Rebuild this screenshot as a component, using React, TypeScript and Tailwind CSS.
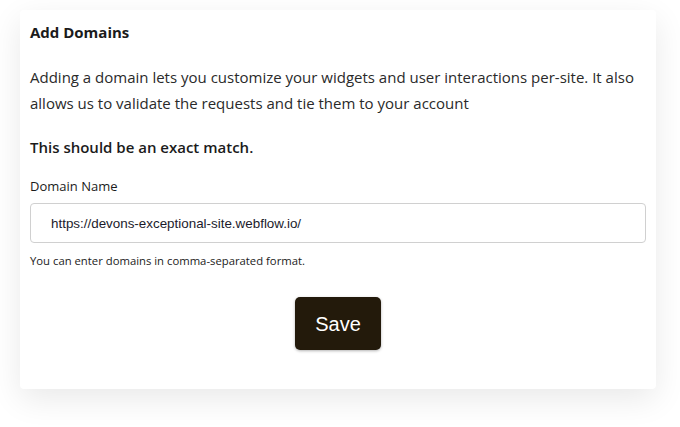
export default function App() {
  return (
    <div className="min-h-[427px] bg-white pl-5 pr-6 pt-[10px] pb-9 font-['Open_Sans',sans-serif] text-[#1b1b1b]">
      <div className="rounded bg-white px-[10px] pt-[12px] pb-[39px] shadow-[0_10px_32px_rgba(0,0,0,0.09)]">
        <h2 className="text-[15px] font-bold leading-5">Add Domains</h2>
        <p className="mt-[22px] text-[15px] leading-[26px] text-[#2a2a2a]">
          Adding a domain lets you customize your widgets and user interactions per-site. It also
          allows us to validate the requests and tie them to your account
        </p>
        <p className="mt-[19px] text-[15px] font-semibold leading-6">This should be an exact match.</p>
        <label className="mt-[19px] block text-[13px] leading-4">Domain Name</label>
        <input
          className="mt-[9px] h-10 w-full rounded border border-[#d0d0d0] px-5 font-['Liberation_Sans',sans-serif] text-[13.4px] text-[#1b1b2b] outline-none"
          defaultValue="https://devons-exceptional-site.webflow.io/"
        />
        <p className="mt-[10px] text-[11.3px] leading-4">You can enter domains in comma-separated format.</p>
        <div className="mt-[28px] flex justify-center">
          <button
            type="button"
            className="h-[53px] w-[86px] rounded-[5px] bg-[#231a0b] font-['Liberation_Sans',sans-serif] text-[20px] text-white shadow-[0_1px_3px_rgba(0,0,0,0.3)]"
          >
            Save
          </button>
        </div>
      </div>
    </div>
  );
}
